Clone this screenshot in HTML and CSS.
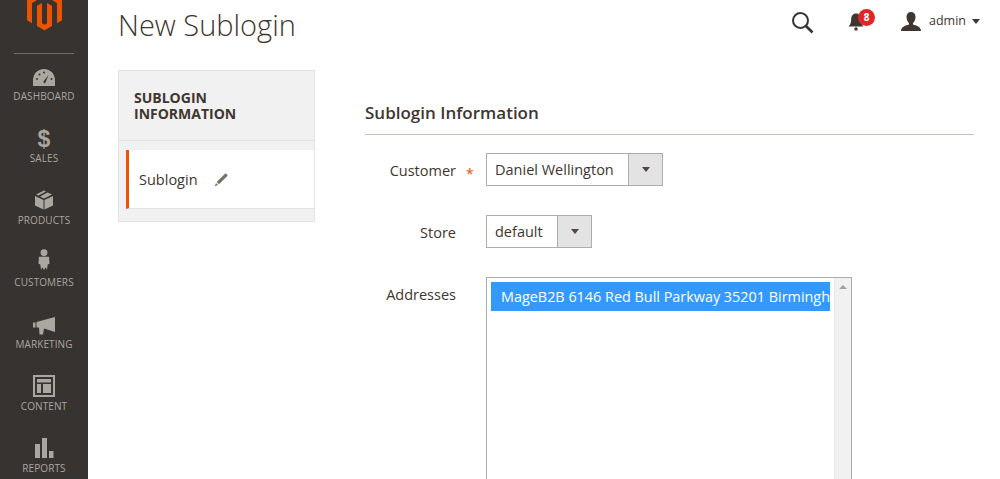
FILE: index.html
```html
<!DOCTYPE html>
<html lang="en">
<head>
<meta charset="utf-8">
<title>New Sublogin</title>
<link rel="stylesheet" href="styles.css">
</head>
<body>
<div class="page">
  <aside class="sidebar">
    <div class="logo">
      <svg width="35" height="40.400" viewBox="1.600 0 20.800 24"><path fill="#eb5202" d="M12 24l-4.455-2.572v-12l2.970-1.715v12.001l1.485.902 1.485-.902V7.713l2.970 1.715v12L12 24z"/><path fill="#eb5202" d="M22.391 6v12l-2.970 1.714V7.713L12 3.430 4.574 7.713v12L1.609 18V6L12 0l10.391 6z"/></svg>
    </div>
    <div class="logo-rule"></div>
    <nav class="nav">
      <a class="nav-item">
        <svg class="nav-icon" width="24" height="20" viewBox="0 0 24 20"><path fill="#aaa6a0" d="M12 1C5.500 1 1 6 1 12.500V18h22v-5.500C23 6 18.500 1 12 1z"/><path fill="#373330" d="M16.500 7 L11.500 13.500 L12 15.500 L13.500 14.500 Z"/><circle cx="5" cy="11" r="1" fill="#373330"/><circle cx="7.500" cy="6.500" r="1" fill="#373330"/><circle cx="12" cy="4.500" r="1" fill="#373330"/><circle cx="19.500" cy="11" r="1" fill="#373330"/></svg>
        <span class="nav-label">DASHBOARD</span>
      </a>
      <a class="nav-item">
        <span class="nav-dollar">$</span>
        <span class="nav-label">SALES</span>
      </a>
      <a class="nav-item">
        <svg class="nav-icon nav-icon-lift" width="20" height="20" viewBox="0 0 20 20"><path fill="#aaa6a0" d="M1 6 L9.500 10 V19.500 L1 15.500 Z M19 6 V15.500 L10.500 19.500 V10 Z M2 4.500 L10 .5 L12 1.500 L4.500 5.500 Z M6 6.500 L13.500 2.500 L18 4.500 L10 8.500 Z"/></svg>
        <span class="nav-label">PRODUCTS</span>
      </a>
      <a class="nav-item">
        <svg class="nav-icon nav-icon-high" width="24" height="22" viewBox="0 0 24 24"><circle cx="12" cy="4" r="3.800" fill="#aaa6a0"/><path fill="#aaa6a0" d="M6.500 8.500h11l.5 7.500-2 1-.7 6-1.500-3-1.800 3-1.800-3-1.500 3-.7-6-2-1z"/></svg>
        <span class="nav-label">CUSTOMERS</span>
      </a>
      <a class="nav-item">
        <svg class="nav-icon" width="24" height="20" viewBox="0 0 24 20"><path fill="#aaa6a0" d="M1 6.500h2.500v5H1z M4.500 6 L23 1 V16 L12 12.500 L11 18.500 H7.500 L7 11.500 L4.500 11.500 Z"/></svg>
        <span class="nav-label">MARKETING</span>
      </a>
      <a class="nav-item">
        <svg class="nav-icon nav-icon-mid" width="22" height="22" viewBox="0 0 22 22"><path fill="none" stroke="#aaa6a0" stroke-width="2" d="M1 1h20v20H1z"/><path fill="#aaa6a0" d="M4 4h14v3.500H4zM4 9h4v9H4zM10 9h8v9h-8z"/></svg>
        <span class="nav-label">CONTENT</span>
      </a>
      <a class="nav-item">
        <svg class="nav-icon nav-icon-lift" width="24" height="20" viewBox="0 0 24 20"><path fill="#aaa6a0" d="M3 6h5v14H3zM10 0h5v20h-5zM17 13h4.500v7H17z"/></svg>
        <span class="nav-label">REPORTS</span>
      </a>
    </nav>
  </aside>
  <main class="main">
    <header class="topbar">
      <h1 class="title">New Sublogin</h1>
      <div class="actions">
        <svg class="search-icon" width="23" height="23" viewBox="0 0 23 23"><circle cx="9.500" cy="9.500" r="7.500" fill="none" stroke="#373330" stroke-width="2"/><path stroke="#373330" stroke-width="2.600" d="M15 15 L21.500 21.500"/></svg>
        <div class="bell">
          <svg width="16" height="20" viewBox="0 0 16 20"><path fill="#41362f" d="M8 1.500c-3.200 0-4.800 2.500-4.800 5.500 0 4-1.200 6-2.700 7.500h15C14 13 12.800 11 12.800 7c0-3-1.600-5.500-4.800-5.500z"/><circle cx="8" cy="17" r="1.700" fill="#41362f"/></svg>
          <span class="badge">8</span>
        </div>
        <div class="user">
          <svg width="20" height="19" viewBox="0 0 20 19"><path fill="#41362f" d="M10 0c3 0 4.500 2 4.500 5 0 2.500-1 5-2.500 6v1.500c3 1 8 2 8 6.500H0c0-4.500 5-5.500 8-6.500V11C6.500 10 5.500 7.500 5.500 5 5.500 2 7 0 10 0z"/></svg>
          <span class="user-name">admin</span>
          <span class="user-caret"></span>
        </div>
      </div>
    </header>
    <div class="columns">
      <div class="tabs">
        <div class="tabs-title">SUBLOGIN INFORMATION</div>
        <div class="tabs-body">
          <div class="tab-item">
            <span>Sublogin</span>
            <svg width="15" height="15" viewBox="0 0 15 15"><path fill="#777067" d="M11.500 1.200 L13.800 3.500 L5 12.300 L2.700 10 Z M2 11 L4 13 L.8 14.200 Z"/></svg>
          </div>
        </div>
      </div>
      <section class="form">
        <h2 class="form-title">Sublogin Information</h2>
        <div class="row">
          <div class="label">Customer<span class="req">*</span></div>
          <div class="select select-customer"><span class="select-value">Daniel Wellington</span><span class="select-btn"><i class="caret"></i></span></div>
        </div>
        <div class="row">
          <div class="label">Store</div>
          <div class="select select-store"><span class="select-value">default</span><span class="select-btn"><i class="caret"></i></span></div>
        </div>
        <div class="row row-multi">
          <div class="label">Addresses</div>
          <div class="multi">
            <div class="multi-list"><div class="option">MageB2B 6146 Red Bull Parkway 35201 Birmingham Alabama</div></div>
            <div class="scrollbar"><i class="scroll-up"></i></div>
          </div>
        </div>
      </section>
    </div>
  </main>
</div>
</body>
</html>
```
FILE: styles.css
```css
* { box-sizing: border-box; }
html, body { margin: 0; height: 479px; overflow: hidden; background: #fff; }
body { font-family: "Open Sans", "Liberation Sans", sans-serif; color: #41362f; font-size: 14.500px; }
.page { display: flex; height: 479px; overflow: hidden; }

.sidebar { width: 88px; flex: none; background: #373330; display: flex; flex-direction: column; align-items: center; overflow: hidden; }
.logo { height: 63px; margin-top: -10px; display: flex; justify-content: center; flex: none; }
.logo-rule { width: 60px; height: 1px; background: #736e69; flex: none; }
.nav { display: flex; flex-direction: column; padding-top: 13px; }
.nav-item { height: 62px; width: 88px; flex: none; display: flex; flex-direction: column; align-items: center; justify-content: flex-end; }
.nav-item:first-child { height: 36px; }
.nav-icon { display: block; margin-bottom: 1px; }
.nav-icon-lift { margin-bottom: 3px; }
.nav-icon-mid { margin-bottom: 2px; }
.nav-icon-high { margin-bottom: 4px; }
.nav-dollar { font-size: 23px; line-height: 24px; font-weight: 700; color: #aaa6a0; font-family: "Liberation Sans", sans-serif; }
.nav-label { font-size: 10px; line-height: 14px; color: #aaa6a0; letter-spacing: .1px; }

.main { flex: 1; min-width: 0; padding-left: 30px; padding-right: 26px; }
.topbar { height: 70px; display: flex; justify-content: space-between; }
.title { margin: 5px 0 0; font-size: 29px; line-height: 40px; font-weight: 300; color: #41362f; }
.actions { display: flex; align-items: flex-start; padding-top: 10px; margin-right: -6px; }
.search-icon { margin-top: 1px; }
.bell { position: relative; margin-left: 34px; margin-top: 2px; height: 20px; }
.badge { position: absolute; top: -3px; left: 10px; width: 17px; height: 17px; border-radius: 50%; background: #e22626; color: #fff; font-size: 10px; line-height: 17px; font-weight: 700; text-align: center; }
.user { display: flex; align-items: center; margin-left: 37px; height: 20px; margin-top: 1px; }
.user-name { margin-left: 8px; font-size: 12.500px; line-height: 22px; }
.user-caret { margin-left: 6px; width: 0; height: 0; border-left: 4px solid transparent; border-right: 4px solid transparent; border-top: 5px solid #41362f; }

.columns { display: flex; }
.tabs { width: 197px; height: 152px; flex: none; background: #f1f1f1; border: 1px solid #e3e3e3; display: flex; flex-direction: column; }
.tabs-title { height: 70px; flex: none; padding: 19px 15px 0; border-bottom: 1px solid #e3e3e3; font-size: 14px; line-height: 16px; font-weight: 700; color: #41362f; }
.tabs-body { padding: 9px 0 0 7px; }
.tab-item { height: 59px; background: #fff; border-left: 3px solid #eb5202; border-bottom: 1px solid #e3e3e3; display: flex; align-items: center; gap: 16px; padding-left: 10px; }

.form { margin-left: 50px; flex: 1; min-width: 0; }
.form-title { margin: 31px 0 0; height: 34px; border-bottom: 1px solid #cac3b4; font-size: 17px; line-height: 24px; font-weight: 600; color: #41362f; }
.row { display: flex; margin-top: 18px; height: 33px; }
.row + .row { margin-top: 29px; }
.row-multi { height: 260px; }
.label { width: 91px; margin-right: 30px; flex: none; text-align: right; line-height: 35px; position: relative; }
.req { position: absolute; left: 101px; top: 3px; color: #eb5202; font-size: 14px; }
.select { height: 33px; border: 1px solid #adadad; display: flex; align-items: stretch; }
.select-value { padding-left: 8px; line-height: 31px; color: #41362f; }
.select-customer { width: 177px; }
.select-store { width: 106px; }
.select-customer .select-value { width: 141px; }
.select-store .select-value { width: 70px; }
.select-btn { flex: 1; border-left: 1px solid #adadad; background: #e3e3e3; display: flex; align-items: center; justify-content: center; }
.caret { width: 0; height: 0; border-left: 4.500px solid transparent; border-right: 4.500px solid transparent; border-top: 5px solid #514943; }
.multi { width: 366px; height: 260px; border: 1px solid #adadad; display: flex; }
.multi-list { flex: 1; min-width: 0; padding: 4px 0 0 4px; overflow: hidden; }
.option { height: 29px; width: 339px; overflow: hidden; white-space: nowrap; background: #3399ff; color: #fff; font-size: 14.400px; line-height: 29px; padding-left: 10px; }
.scrollbar { width: 17px; flex: none; background: #f1f1f1; border-left: 1px solid #e8e8e8; display: flex; justify-content: center; padding-top: 7px; }
.scroll-up { width: 0; height: 0; border-left: 4px solid transparent; border-right: 4px solid transparent; border-bottom: 4px solid #a3a3a3; }
```
